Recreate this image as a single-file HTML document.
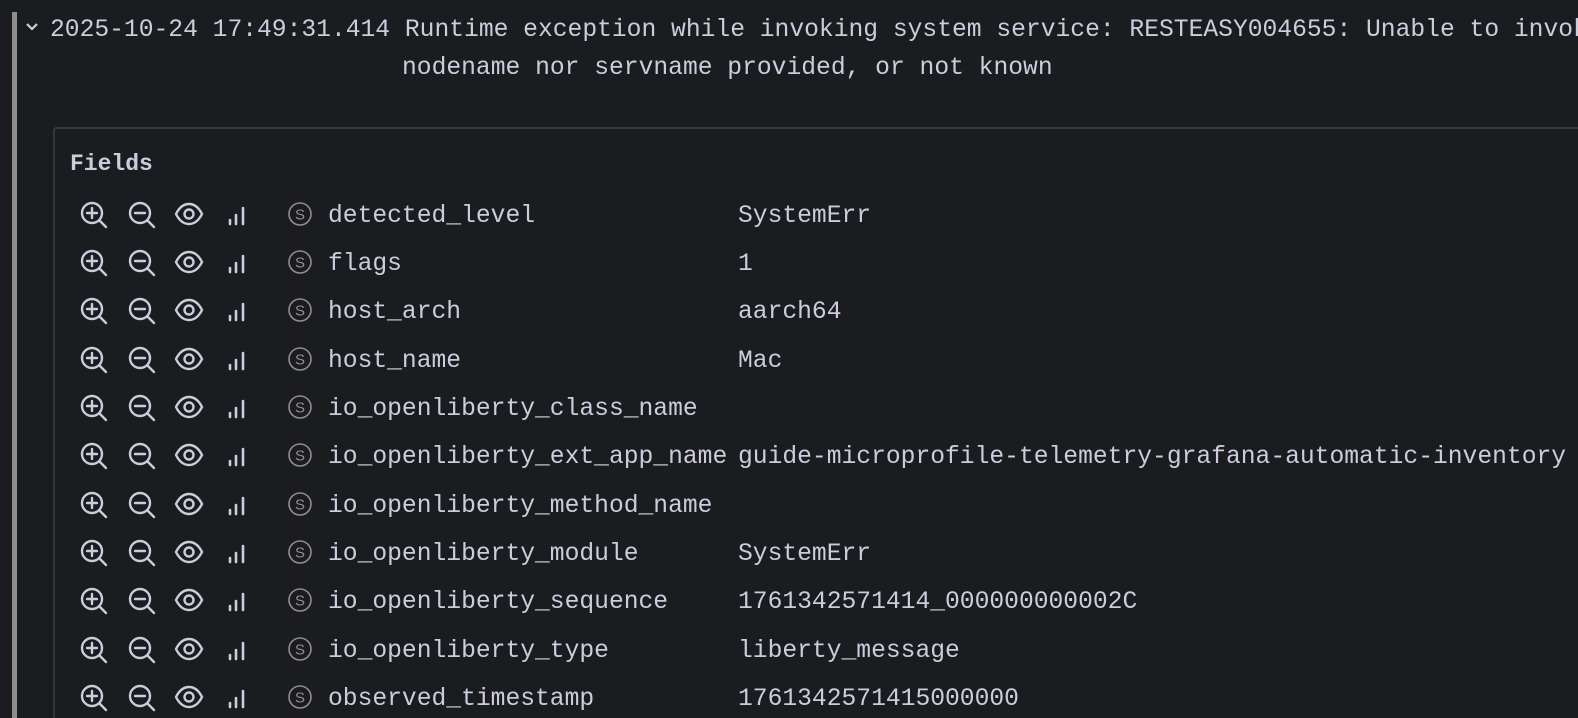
<!DOCTYPE html>
<html style="width:1578px;height:718px;overflow:hidden"><head><meta charset="utf-8"><style>
body{margin:0;width:1578px;height:718px;background:#1b1c20;overflow:hidden;font-family:"Liberation Mono",monospace;color:#ccccdc;position:relative}
.bar{position:absolute;left:12px;top:12px;width:5px;height:706px;background:#8e8e8a}
.t{position:absolute;font-size:24.65px;white-space:pre;line-height:38px}
.box{position:absolute;left:53px;top:127px;width:1600px;height:620px;border:2px solid #34363b;border-radius:3px}
.row{position:absolute;left:0;height:48px;width:1578px}
.row svg{position:absolute}
.row .n{position:absolute;left:328px;top:-16px;font-size:24.65px;line-height:38px;white-space:pre}
.row .v{position:absolute;left:738px;top:-16px;font-size:24.65px;line-height:38px;white-space:pre}
</style></head><body>
<div class="bar"></div>
<svg style="position:absolute;left:24px;top:21px" width="16" height="12" viewBox="0 0 16 12"><path d="M3 3 L8 8 L13 3" stroke="#ccccdc" stroke-width="2.2" fill="none"/></svg>
<div class="t" style="left:50px;top:11px">2025-10-24 17:49:31.414 Runtime exception while invoking system service: RESTEASY004655: Unable to invoke</div>
<div class="t" style="left:402px;top:49px">nodename nor servname provided, or not known</div>
<div class="box"></div>
<div class="t" style="left:70px;top:145px;font-weight:bold;font-size:23px">Fields</div>
<div id="rows"></div>
<script>
var d=[["detected_level","SystemErr"],["flags","1"],["host_arch","aarch64"],["host_name","Mac"],["io_openliberty_class_name",""],["io_openliberty_ext_app_name","guide-microprofile-telemetry-grafana-automatic-inventory"],["io_openliberty_method_name",""],["io_openliberty_module","SystemErr"],["io_openliberty_sequence","1761342571414_000000000002C"],["io_openliberty_type","liberty_message"],["observed_timestamp","1761342571415000000"]];
var ys=[213,261,309,358,406,454,503,551,599,648,696];var h="";
var c="#ccccdc";
for(var i=0;i<d.length;i++){var y=ys[i];
h+='<div class="row" style="top:'+y+'px">'+
'<svg style="left:78px;top:-13px" width="32" height="32" viewBox="0 0 32 32"><circle cx="14" cy="13" r="10" stroke="'+c+'" stroke-width="2.4" fill="none"/><path d="M21.5 20.5L28 27M9 13h10M14 8v10" stroke="'+c+'" stroke-width="2.4" stroke-linecap="round"/></svg>'+
'<svg style="left:126px;top:-13px" width="32" height="32" viewBox="0 0 32 32"><circle cx="14" cy="13" r="10" stroke="'+c+'" stroke-width="2.4" fill="none"/><path d="M21.5 20.5L28 27M9 13h10" stroke="'+c+'" stroke-width="2.4" stroke-linecap="round"/></svg>'+
'<svg style="left:174px;top:-13px" width="30" height="28" viewBox="0 0 30 28"><path d="M2 14C6 6 11 4 15 4s9 2 13 10c-4 8-9 10-13 10S6 22 2 14z" stroke="'+c+'" stroke-width="2.4" fill="none"/><circle cx="15" cy="14" r="4.5" stroke="'+c+'" stroke-width="2.4" fill="none"/></svg>'+
'<svg style="left:226px;top:-11px" width="22" height="24" viewBox="0 0 22 24"><path d="M4 22v-4M10 22v-9M17 22v-16" stroke="'+c+'" stroke-width="2.6" stroke-linecap="round"/></svg>'+
'<svg style="left:287px;top:-12px" width="26" height="26" viewBox="0 0 26 26"><circle cx="13" cy="13" r="11" stroke="#8e8e94" stroke-width="1.6" fill="none"/><text x="13" y="18.5" text-anchor="middle" font-family="Liberation Sans,sans-serif" font-size="15" fill="#8e8e94">S</text></svg>'+
'<div class="n">'+d[i][0]+'</div><div class="v">'+d[i][1]+'</div></div>';}
document.getElementById('rows').innerHTML=h;
</script>
</body></html>
